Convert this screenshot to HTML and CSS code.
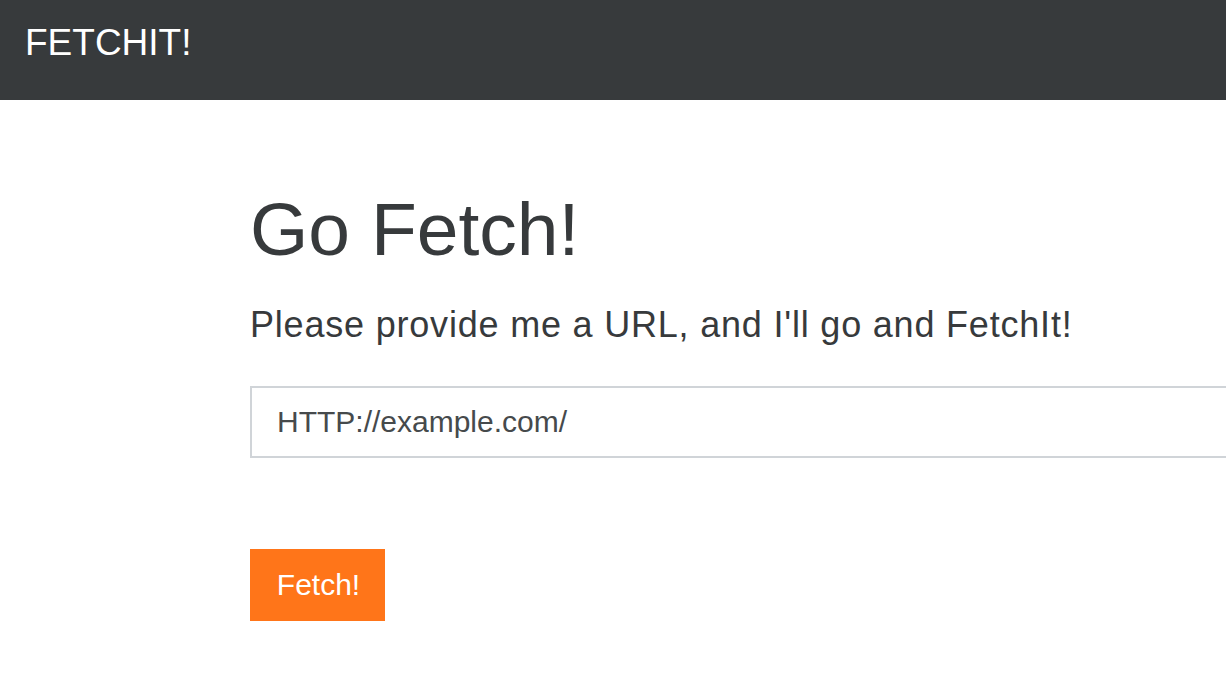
FILE: index.html
```html
<!DOCTYPE html>
<html lang="en">
<head>
<meta charset="utf-8">
<title>FetchIt</title>
<link rel="stylesheet" href="styles.css">
</head>
<body>
<header class="topbar">
  <div class="brand">FETCHIT!</div>
</header>
<main class="content">
  <h1 class="title">Go Fetch!</h1>
  <p class="lead">Please provide me a URL, and I'll go and FetchIt!</p>
  <form class="fetch-form">
    <input class="url-input" type="text" value="HTTP://example.com/">
    <button class="fetch-btn" type="button">Fetch!</button>
  </form>
</main>
</body>
</html>
```

FILE: styles.css
```css
html, body {
  margin: 0;
  padding: 0;
  background: #ffffff;
  overflow: hidden;
}
body {
  font-family: "Liberation Sans", Arial, sans-serif;
  color: #373a3c;
  width: 1226px;
  height: 686px;
}
.topbar {
  height: 100px;
  background: #373a3c;
  display: flex;
  align-items: flex-start;
  padding-left: 25px;
  box-sizing: border-box;
}
.brand {
  color: #ffffff;
  font-size: 37px;
  line-height: 37px;
  margin-top: 24px;
}
.content {
  padding-left: 250px;
  padding-top: 92px;
}
.title {
  margin: 0;
  font-weight: 300;
  font-size: 75px;
  line-height: 75px;
  letter-spacing: 0;
}
.lead {
  margin: 38px 0 0 0;
  font-size: 36px;
  line-height: 40px;
  letter-spacing: 0.8px;
}
.fetch-form {
  margin-top: 41px;
  display: flex;
  flex-direction: column;
  align-items: flex-start;
}
.url-input {
  width: 1000px;
  height: 72px;
  box-sizing: border-box;
  border: 2px solid #d0d4d8;
  border-radius: 0;
  padding: 0 25px;
  font-family: "Liberation Sans", Arial, sans-serif;
  font-size: 30px;
  color: #464a4c;
  outline: none;
  background: #fff;
}
.fetch-btn {
  margin-top: 91px;
  width: 135px;
  height: 72px;
  border: none;
  border-radius: 0;
  background: #ff7519;
  color: #ffffff;
  font-family: "Liberation Sans", Arial, sans-serif;
  font-size: 30px;
  padding: 0 0 0 2px;
  cursor: pointer;
}
```
